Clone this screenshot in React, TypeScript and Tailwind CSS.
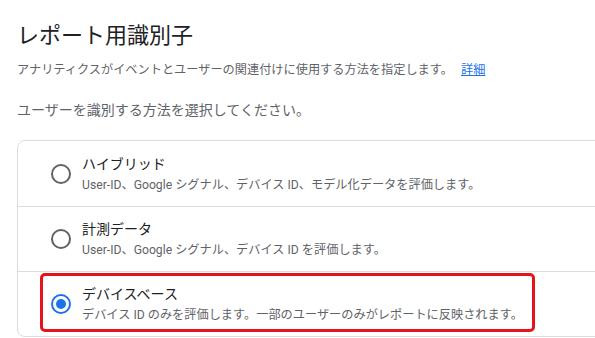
import React, { useState } from "react";

const options = [
  {
    id: "hybrid",
    label: "ハイブリッド",
    desc: "User-ID、Google シグナル、デバイス ID、モデル化データを評価します。",
  },
  {
    id: "observed",
    label: "計測データ",
    desc: "User-ID、Google シグナル、デバイス ID を評価します。",
  },
  {
    id: "device",
    label: "デバイスベース",
    desc: "デバイス ID のみを評価します。一部のユーザーのみがレポートに反映されます。",
  },
];

function Radio({ checked }: { checked: boolean }) {
  return (
    <span
      className={`w-[20px] h-[20px] rounded-full border-2 flex items-center justify-center shrink-0 ${
        checked ? "border-[#1a73e8]" : "border-[#5f6368]"
      }`}
    >
      {checked && <span className="w-[10px] h-[10px] rounded-full bg-[#1a73e8]" />}
    </span>
  );
}

export default function App() {
  const [selected, setSelected] = useState("device");

  return (
    <div
      className="w-[595px] h-[338px] overflow-hidden bg-white pl-[17px] pt-[22px]"
      style={{ fontFamily: 'Roboto, "Noto Sans CJK JP", sans-serif' }}
    >
      <h1 className="text-[22px] leading-[28px] text-[#202124]">レポート用識別子</h1>
      <p className="mt-[11px] text-[12.2px] leading-[18px] text-[#5f6368]">
        アナリティクスがイベントとユーザーの関連付けに使用する方法を指定します。
        <a className="ml-[8px] text-[#1a73e8] underline">詳細</a>
      </p>
      <p className="mt-[20px] text-[14px] leading-[22px] text-[#5f6368]">
        ユーザーを識別する方法を選択してください。
      </p>

      {/* options card */}
      <div className="mt-[19px] w-[620px] border border-[#dadce0] rounded-[8px]">
        {options.map((o, i) => (
          <div
            key={o.id}
            onClick={() => setSelected(o.id)}
            className={`relative h-[65px] flex items-center pl-[33px] ${
              i > 0 ? "border-t border-[#dadce0]" : ""
            }`}
          >
            <Radio checked={selected === o.id} />
            <div className="ml-[11px] flex flex-col">
              <span className="text-[14px] leading-[20px] text-[#202124]">{o.label}</span>
              <span className="mt-[2px] text-[12.2px] leading-[18px] text-[#5f6368]">{o.desc}</span>
            </div>
            {o.id === "device" && (
              <div className="absolute left-[22px] top-[1px] w-[495px] h-[59px] border-[3px] border-[#e4141b] rounded-[5px] pointer-events-none" />
            )}
          </div>
        ))}
      </div>
    </div>
  );
}
